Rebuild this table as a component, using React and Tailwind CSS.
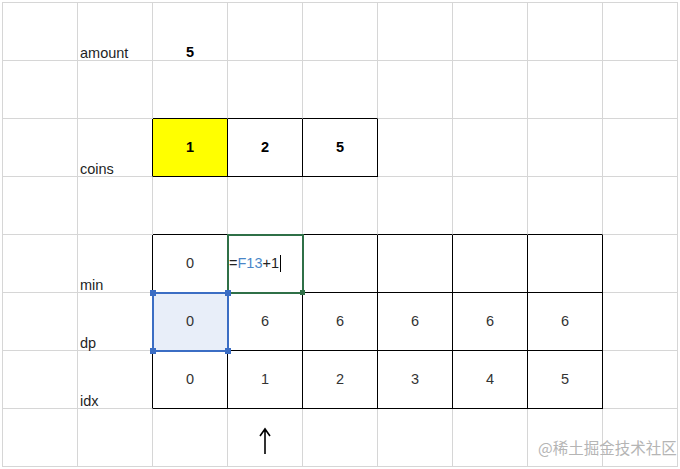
import React from 'react';

const COLS = 9;
const ROWS = 8;

// row content: label in column 1, values from column 2 on
const data = [
  { label: 'amount', values: [{ v: '5', bold: true }], bottom: true },
  { label: '', values: [] },
  { label: 'coins', values: [{ v: '1', bold: true, yellow: true }, { v: '2', bold: true }, { v: '5', bold: true }] },
  { label: '', values: [] },
  { label: 'min', values: [{ v: '0' }, { edit: true }, {}, {}, {}, {}] },
  { label: 'dp', values: [{ v: '0', selected: true }, { v: '6' }, { v: '6' }, { v: '6' }, { v: '6' }, { v: '6' }] },
  { label: 'idx', values: [{ v: '0' }, { v: '1' }, { v: '2' }, { v: '3' }, { v: '4' }, { v: '5' }] },
  { label: '', values: [{}, { arrow: true }] },
];

function inBlack(r, c) {
  if (r === 2 && c >= 2 && c <= 4) return true;
  if (r >= 4 && r <= 6 && c >= 2 && c <= 7) return true;
  return false;
}

function Handle({ className }) {
  return <div className={`absolute z-20 w-[6px] h-[6px] bg-[#3b6dc4] ${className}`}></div>;
}

function Cell({ r, c }) {
  const row = data[r];
  const right = inBlack(r, c) || inBlack(r, c + 1) ? 'border-r-black' : 'border-r-[#d6d6d6]';
  const bottom = inBlack(r, c) || inBlack(r + 1, c) ? 'border-b-black' : 'border-b-[#d6d6d6]';

  if (c === 1) {
    return (
      <div className={`border-r border-b ${right} ${bottom} flex items-end pl-[2px] leading-none text-[14.5px] text-[#1f1f1f]`}>
        {row.label}
      </div>
    );
  }

  const cell = c >= 2 ? row.values[c - 2] || {} : {};
  const bg = cell.yellow ? 'bg-[#ffff00]' : cell.selected ? 'bg-[#e8eef9]' : 'bg-white';
  const align = row.bottom ? 'items-end pb-[1px] leading-none' : 'items-center';

  return (
    <div className={`relative border-r border-b ${right} ${bottom} ${bg} flex justify-center ${align} text-[14.5px]`}>
      {cell.v && (
        <span className={cell.bold ? 'font-bold text-black' : 'text-[#333]'}>{cell.v}</span>
      )}
      {cell.arrow && (
        <svg width="14" height="28" viewBox="0 0 14 28" className="mt-[6px]">
          <path d="M7 2 V27 M2 9 L7 2 L12 9" fill="none" stroke="#000" strokeWidth="1.6" />
        </svg>
      )}
      {cell.edit && (
        <>
          <div className="absolute z-10 left-[-1px] top-[-1px] w-[77px] h-[60px] border-2 border-[#2f7047]"></div>
          <div className="absolute z-10 right-[-3px] bottom-[-3px] w-[5px] h-[5px] bg-[#2f7047]"></div>
          <div className="absolute z-10 left-[1px] top-0 bottom-0 flex items-center text-[14.5px]">
            <span className="text-[#222]">=</span>
            <span className="text-[#4a86c8]">F13</span>
            <span className="text-[#222]">+1</span>
            <span className="inline-block w-px h-[17px] bg-black ml-[1px]"></span>
          </div>
        </>
      )}
      {cell.selected && (
        <>
          <div className="absolute z-20 left-[-1px] top-[-1px] w-[77px] h-[60px] border-2 border-[#3b6dc4]"></div>
          <Handle className="left-[-3px] top-[-3px]" />
          <Handle className="right-[-4px] top-[-3px]" />
          <Handle className="left-[-3px] bottom-[-4px]" />
          <Handle className="right-[-4px] bottom-[-4px]" />
        </>
      )}
    </div>
  );
}

export default function App() {
  return (
    <div className="relative w-[680px] h-[469px] bg-white overflow-hidden font-['Liberation_Sans',Arial,sans-serif]">
      <div className="ml-[2px] mt-[2px] grid grid-cols-[repeat(9,75px)] grid-rows-[repeat(8,58px)] border-l border-t border-[#d6d6d6] w-[676px]">
        {Array.from({ length: ROWS }).map((_, r) =>
          Array.from({ length: COLS }).map((_, c) => <Cell key={`${r}-${c}`} r={r} c={c} />)
        )}
      </div>
      <div className="absolute z-30 left-[538px] top-[440px] whitespace-nowrap leading-none text-[15.5px] text-[#b5b5b5] font-['Noto_Sans_CJK_SC',sans-serif]">
        @稀土掘金技术社区
      </div>
    </div>
  );
}
